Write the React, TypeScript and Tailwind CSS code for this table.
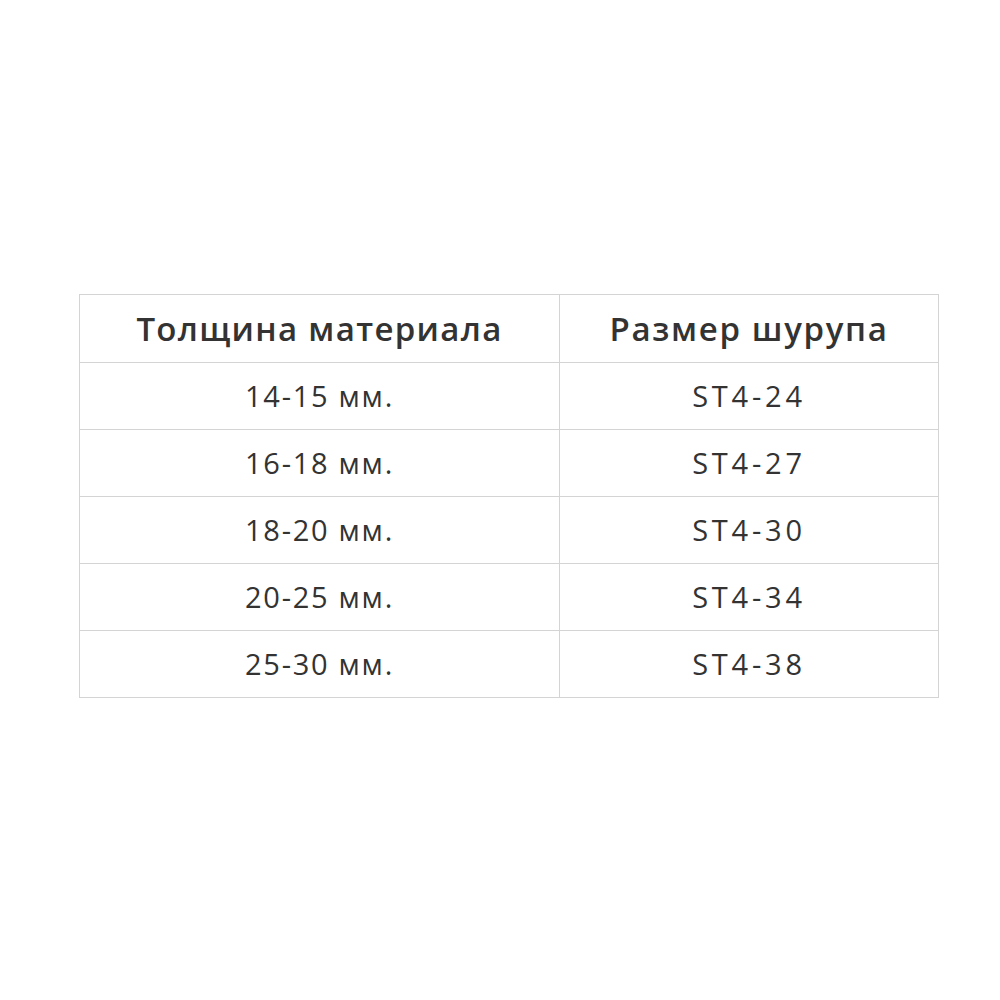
import React from 'react'

const rows = [
  ['14-15 мм.', 'ST4-24'],
  ['16-18 мм.', 'ST4-27'],
  ['18-20 мм.', 'ST4-30'],
  ['20-25 мм.', 'ST4-34'],
  ['25-30 мм.', 'ST4-38'],
]

export default function App() {
  return (
    <div className="w-[1000px] h-[1000px] bg-white pt-[294px] pl-[79px]" style={{ fontFamily: '"Open Sans", "Noto Sans", sans-serif' }}>
      <table className="border-collapse w-[860px] text-[#333333]">
        <thead>
          <tr className="h-[68px]">
            <th className="w-[480px] border border-[#d4d4d4] text-[33px] font-semibold tracking-[0.04em] text-center">Толщина материала</th>
            <th className="border border-[#d4d4d4] text-[33px] font-semibold tracking-[0.05em] text-center">Размер шурупа</th>
          </tr>
        </thead>
        <tbody>
          {rows.map(([a, b]) => (
            <tr key={a} className="h-[67px]">
              <td className="border border-[#d4d4d4] text-[29px] tracking-[0.06em] text-center">{a}</td>
              <td className="border border-[#d4d4d4] text-[29px] tracking-[0.13em] text-center">{b}</td>
            </tr>
          ))}
        </tbody>
      </table>
    </div>
  )
}
